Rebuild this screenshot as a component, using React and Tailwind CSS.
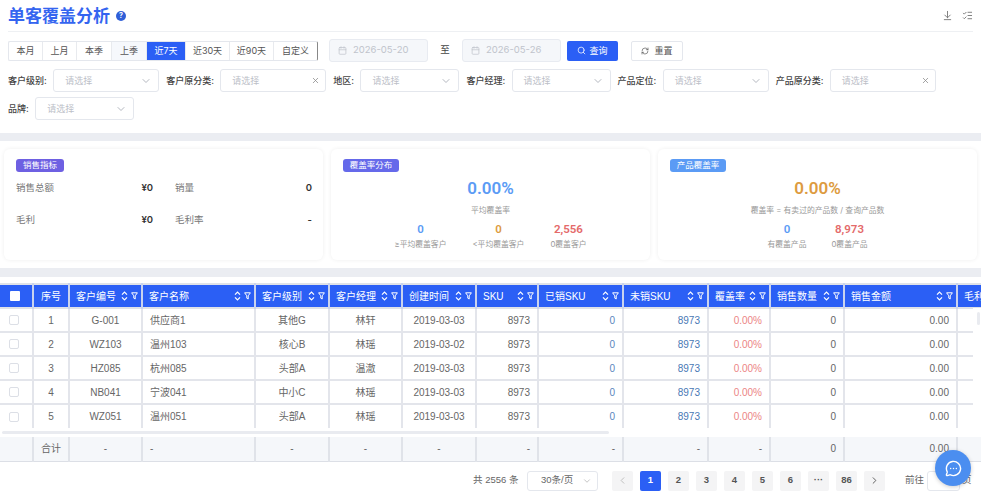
import { ArrowDownToLine, Calendar, ChevronDown, ChevronLeft, ChevronRight, ListChecks, MessageCircleMore, RefreshCw, Search, X } from "lucide-react";

const ranges = [
  ["本月", "w-[34px]"],
  ["上月", "w-[34px]"],
  ["本季", "w-[35px]"],
  ["上季", "w-[35px]"],
  ["近7天", "w-[39px]"],
  ["近30天", "w-[44px]"],
  ["近90天", "w-[44px]"],
  ["自定义", "w-[43px]"],
];

const columns = [
  { title: "", width: "w-[33px]" },
  { title: "序号", width: "w-[36px]", center: true },
  { title: "客户编号", width: "w-[73px]", tools: true },
  { title: "客户名称", width: "w-[113px]", tools: true },
  { title: "客户级别", width: "w-[74px]", tools: true },
  { title: "客户经理", width: "w-[73px]", tools: true },
  { title: "创建时间", width: "w-[74px]", tools: true },
  { title: "SKU", width: "w-[62px]", tools: true },
  { title: "已销SKU", width: "w-[85px]", tools: true },
  { title: "未销SKU", width: "w-[85px]", tools: true },
  { title: "覆盖率", width: "w-[62px]", tools: true },
  { title: "销售数量", width: "w-[74px]", tools: true },
  { title: "销售金额", width: "w-[113px]", tools: true },
  { title: "毛利", width: "w-[64px]" },
];

const rows = [
  [1, "G-001", "供应商1", "其他G", "林轩", "2019-03-03"],
  [2, "WZ103", "温州103", "核心B", "林瑶", "2019-03-02"],
  [3, "HZ085", "杭州085", "头部A", "温澈", "2019-03-03"],
  [4, "NB041", "宁波041", "中小C", "林瑶", "2019-03-03"],
  [5, "WZ051", "温州051", "头部A", "林瑶", "2019-03-03"],
];

function Colgroup() {
  return (
    <colgroup>
      {columns.map((col, i) => (
        <col key={i} className={col.width} />
      ))}
    </colgroup>
  );
}

function SelectBox({ label, width, clear }) {
  return (
    <div className="flex items-center">
      {label && <span className="mr-[6.4px] whitespace-nowrap text-[9px] font-medium text-[#444]">{label}:</span>}
      <div className={`flex h-[23px] items-center justify-between rounded-[3px] border border-[#e4e7ed] bg-white pl-[11px] pr-[5px] text-[9px] text-[#bcc0c8] ${width}`}>
        <span>请选择</span>
        {clear ? <X size={9} className="text-[#888]" /> : <ChevronDown size={12} className="mr-[1px] text-[#b4b8c0]" />}
      </div>
    </div>
  );
}

function DateBox({ value }) {
  return (
    <div className="flex h-[23px] w-[99px] items-center gap-[6px] rounded-[3px] border border-[#e8ebf1] bg-[#f5f7fa] pl-[8px] text-[9.5px] text-[#c0c4cc]">
      <Calendar size={9} />
      {value}
    </div>
  );
}

function Tag({ color, width, children }) {
  return <div className={`flex h-[13px] items-center justify-center rounded-[3px] text-[8.5px] text-white ${color} ${width}`}>{children}</div>;
}

function Stat({ value, label, color }) {
  return (
    <div className="flex flex-col items-center">
      <div className={`font-['Roboto','Noto_Sans_CJK_SC',sans-serif] text-[11.5px] font-semibold leading-[16px] ${color}`}>{value}</div>
      <div className="text-[7.8px] leading-[14px] text-[#999]">{label}</div>
    </div>
  );
}

function SortIcons() {
  return (
    <span className="ml-auto flex shrink-0 items-center gap-[3px]">
      <svg width="7" height="10" viewBox="0 0 7 10" fill="none" stroke="white" strokeWidth="1.2">
        <path d="M1 3.6 3.5 1 6 3.6M1 6.4 3.5 9 6 6.4" />
      </svg>
      <svg width="7" height="8" viewBox="0 0 7 8" fill="none" stroke="white" strokeWidth="1">
        <path d="M.6.8h5.8L4.2 3.8V7L2.8 6.2V3.8Z" />
      </svg>
    </span>
  );
}

function Pager({ children, active }) {
  return (
    <div className={`flex h-[20px] w-[21px] items-center justify-center rounded-[2px] text-[9.5px] font-semibold ${active ? "bg-[#2b5ff5] text-white" : "bg-[#f4f4f5] text-[#555]"}`}>
      {children}
    </div>
  );
}

export default function App() {
  return (
    <div className="relative h-[494px] w-[981px] overflow-hidden bg-white font-['Inter','Noto_Sans_CJK_SC',sans-serif] text-[#444]">
      <div className="px-2">
        <div className="flex h-[32px] items-center border-b border-[#eef0f3]">
          <h1 className="text-[17px] font-bold leading-[26px] text-[#3465f0]">单客覆盖分析</h1>
          <div className="ml-[6px] flex h-[10px] w-[10px] items-center justify-center rounded-full bg-[#2f5fd8] text-[7px] font-bold leading-none text-white">?</div>
          <div className="ml-auto flex items-center gap-[9px] text-[#777]">
            <ArrowDownToLine size={11} />
            <ListChecks size={11} />
          </div>
        </div>

        <div className="mt-[7px] flex h-[23px] items-center">
          <div className="flex h-[20px] rounded-[2px] border border-[#e4e7ed] border-r-[#888]">
            {ranges.map(([text, width]) => (
              <div
                key={text}
                className={`flex items-center justify-center border-r border-[#e8eaee] text-[9px] last:border-r-0 ${width} ${text === "近7天" ? "bg-[#2b5ff5] text-white" : text === "上季" ? "bg-[#f6f8fc] text-[#555]" : "text-[#555]"}`}
              >
                {text}
              </div>
            ))}
          </div>
          <div className="ml-[11px]">
            <DateBox value="2026-05-20" />
          </div>
          <span className="w-[34px] text-center text-[9.5px] text-[#444]">至</span>
          <DateBox value="2026-05-26" />
          <button className="ml-[6px] flex h-[20px] w-[51px] items-center justify-center gap-[3px] rounded-[2px] bg-[#2b5ff5] text-[9px] text-white">
            <Search size={9} />
            查询
          </button>
          <button className="ml-[13px] flex h-[20px] w-[52px] items-center justify-center gap-[5px] rounded-[2px] border border-[#e4e7ed] text-[9px] text-[#555]">
            <RefreshCw size={8} />
            重置
          </button>
        </div>

        <div className="mt-[7px] flex gap-[7px]">
          <SelectBox label="客户级别" width="w-[106px]" />
          <SelectBox label="客户原分类" width="w-[106px]" clear />
          <SelectBox label="地区" width="w-[99px]" />
          <SelectBox label="客户经理" width="w-[99px]" />
          <SelectBox label="产品定位" width="w-[106px]" />
          <SelectBox label="产品原分类" width="w-[106px]" clear />
        </div>
        <div className="mt-[5px] flex">
          <SelectBox label="品牌" width="w-[99px]" />
        </div>
      </div>

      <div className="mt-[13px] h-[8px] bg-[#ebedf2]" />

      <div className="flex gap-2 px-1 py-2">
        <section className="h-[111px] w-[319px] rounded-[6px] px-3 pt-[10px] shadow-[0_0_4px_rgba(0,0,0,0.07)]">
          <Tag color="bg-[#6e60e2]" width="w-[48px]">销售指标</Tag>
          <div className="mt-[8px] grid grid-cols-[137px_137px] gap-x-[22px] gap-y-[17px] text-[9.5px] leading-[15px]">
            <div className="flex justify-between"><span className="text-[#777]">销售总额</span><b className="font-semibold text-[#333]">¥0</b></div>
            <div className="flex justify-between"><span className="text-[#777]">销量</span><b className="font-semibold text-[#333]">0</b></div>
            <div className="flex justify-between"><span className="text-[#777]">毛利</span><b className="font-semibold text-[#333]">¥0</b></div>
            <div className="flex justify-between"><span className="text-[#777]">毛利率</span><b className="font-semibold text-[#333]">-</b></div>
          </div>
        </section>

        <section className="h-[111px] w-[319px] rounded-[6px] px-3 pt-[10px] shadow-[0_0_4px_rgba(0,0,0,0.07)]">
          <Tag color="bg-[#6569ea]" width="w-[56px]">覆盖率分布</Tag>
          <div className="mt-[5px] text-center font-['Roboto',sans-serif] text-[17px] font-semibold leading-[22px] text-[#5b9bf5]">0.00%</div>
          <div className="mt-[4px] text-center text-[7.8px] leading-[14px] text-[#999]">平均覆盖率</div>
          <div className="mt-[4px] flex justify-center gap-[26px]">
            <Stat value="0" label="≥平均覆盖客户" color="text-[#5b9bf5]" />
            <Stat value="0" label="<平均覆盖客户" color="text-[#dd9b3f]" />
            <Stat value="2,556" label="0覆盖客户" color="text-[#e46a6a]" />
          </div>
        </section>

        <section className="h-[111px] w-[319px] rounded-[6px] px-3 pt-[10px] shadow-[0_0_4px_rgba(0,0,0,0.07)]">
          <Tag color="bg-[#5b9bf5]" width="w-[56px]">产品覆盖率</Tag>
          <div className="mt-[5px] text-center font-['Roboto',sans-serif] text-[17px] font-semibold leading-[22px] text-[#dd9b3f]">0.00%</div>
          <div className="mt-[4px] text-center text-[7.8px] leading-[14px] text-[#999]">覆盖率 = 有卖过的产品数 / 查询产品数</div>
          <div className="mt-[4px] flex justify-center gap-[25px]">
            <Stat value="0" label="有覆盖产品" color="text-[#5b9bf5]" />
            <Stat value="8,973" label="0覆盖产品" color="text-[#e46a6a]" />
          </div>
        </section>
      </div>

      <div className="h-[9px] bg-[#ebedf2]" />

      <div className="relative mt-[6px] font-['Liberation_Sans','Noto_Sans_CJK_SC',sans-serif]">
        <table className="w-[1021px] table-fixed border-collapse text-[10px]">
          <Colgroup />
          <thead>
            <tr className="h-[24px] border-t-2 border-b-2 border-t-[#dfe2e8] border-b-[#dfe2e8] bg-[#2b5ff5] text-white">
              {columns.map((col, i) => (
                <th key={i} className="border-r-2 border-[#c9d3ee] pl-[6px] pr-[3px] font-normal">
                  {i === 0 ? (
                    <span className="ml-[4px] block h-[10px] w-[10px] rounded-[1px] bg-white" />
                  ) : (
                    <div className={`flex items-center whitespace-nowrap text-[10px] ${col.center ? "justify-center pr-[3px]" : ""}`}>
                      <span>{col.title}</span>
                      {col.tools && <SortIcons />}
                    </div>
                  )}
                </th>
              ))}
            </tr>
          </thead>
          <tbody className="text-[#666]">
            {rows.map((row, r) => (
              <tr key={row[0]} className={`h-[24px] ${r < rows.length - 1 ? "border-b-2 border-[#e3e5eb]" : ""}`}>
                <td className="border-r-2 border-[#e3e5eb]">
                  <span className="ml-[9px] block h-[10px] w-[10px] rounded-[2px] border border-[#dcdfe6]" />
                </td>
                <td className="border-r-2 border-[#e3e5eb] text-center">{row[0]}</td>
                <td className="border-r-2 border-[#e3e5eb] text-center">{row[1]}</td>
                <td className="border-r-2 border-[#e3e5eb] px-[7px]">{row[2]}</td>
                <td className="border-r-2 border-[#e3e5eb] text-center">{row[3]}</td>
                <td className="border-r-2 border-[#e3e5eb] text-center">{row[4]}</td>
                <td className="border-r-2 border-[#e3e5eb] text-center">{row[5]}</td>
                <td className="border-r-2 border-[#e3e5eb] px-[7px] text-right">8973</td>
                <td className="border-r-2 border-[#e3e5eb] px-[7px] text-right text-[#5b86bd]">0</td>
                <td className="border-r-2 border-[#e3e5eb] px-[7px] text-right text-[#4a78b5]">8973</td>
                <td className="border-r-2 border-[#e3e5eb] px-[7px] text-right text-[#ec8585]">0.00%</td>
                <td className="border-r-2 border-[#e3e5eb] px-[7px] text-right">0</td>
                <td className="border-r-2 border-[#e3e5eb] px-[7px] text-right">0.00</td>
                <td />
              </tr>
            ))}
          </tbody>
        </table>

        <div className="ml-[2px] mt-[3px] h-[3px] w-[607px] rounded-full bg-[#e9ebf0]" />

        <table className="mt-[3px] w-[1021px] table-fixed border-collapse bg-[#f5f7fa] text-[10px] text-[#666]">
          <Colgroup />
          <tbody>
            <tr className="h-[24px] border-b border-[#dcdfe6]">
              <td className="border-r-2 border-[#e0e3e9]" />
              <td className="border-r-2 border-[#e0e3e9] text-center">合计</td>
              <td className="border-r-2 border-[#e0e3e9] text-center">-</td>
              <td className="border-r-2 border-[#e0e3e9] px-[7px]">-</td>
              <td className="border-r-2 border-[#e0e3e9] text-center">-</td>
              <td className="border-r-2 border-[#e0e3e9] text-center">-</td>
              <td className="border-r-2 border-[#e0e3e9] text-center">-</td>
              <td className="border-r-2 border-[#e0e3e9] px-[7px] text-right">-</td>
              <td className="border-r-2 border-[#e0e3e9] px-[7px] text-right">-</td>
              <td className="border-r-2 border-[#e0e3e9] px-[7px] text-right">-</td>
              <td className="border-r-2 border-[#e0e3e9] px-[7px] text-right">-</td>
              <td className="border-r-2 border-[#e0e3e9] px-[7px] text-right">0</td>
              <td className="border-r-2 border-[#e0e3e9] px-[7px] text-right">0.00</td>
              <td />
            </tr>
          </tbody>
        </table>

        <div className="absolute right-0 top-[25px] h-[124px] w-[8px] bg-white">
          <div className="ml-[4px] mt-[4px] h-[13px] w-[3px] rounded-full bg-[#e9ebf0]" />
        </div>
      </div>

      <div className="mt-[9px] flex h-[20px] items-center pl-[473px] font-['Liberation_Sans','Noto_Sans_CJK_SC',sans-serif] text-[9.5px] text-[#666]">
        <span className="w-[54px] whitespace-nowrap">共 2556 条</span>
        <div className="flex h-[20px] w-[71px] items-center justify-between rounded-[3px] border border-[#e4e7ed] pl-[13px] pr-[5px]">
          30条/页
          <ChevronDown size={10} className="text-[#bbb]" />
        </div>
        <div className="ml-[14px] flex gap-[7px]">
          <Pager><ChevronLeft size={11} className="text-[#bbb]" /></Pager>
          <Pager active>1</Pager>
          <Pager>2</Pager>
          <Pager>3</Pager>
          <Pager>4</Pager>
          <Pager>5</Pager>
          <Pager>6</Pager>
          <Pager>···</Pager>
          <Pager>86</Pager>
          <Pager><ChevronRight size={11} /></Pager>
        </div>
        <span className="ml-[20px] w-[22px] whitespace-nowrap">前往</span>
        <div className="h-[20px] w-[33px] rounded-[3px] border border-[#e4e7ed]" />
        <span className="ml-[2px]">页</span>
      </div>

      <button className="absolute left-[935px] top-[450px] flex h-[36px] w-[36px] items-center justify-center rounded-full bg-[#4b8ef0] text-white shadow-[0_1px_4px_rgba(0,0,0,0.2)]">
        <MessageCircleMore size={17} />
      </button>
    </div>
  );
}
